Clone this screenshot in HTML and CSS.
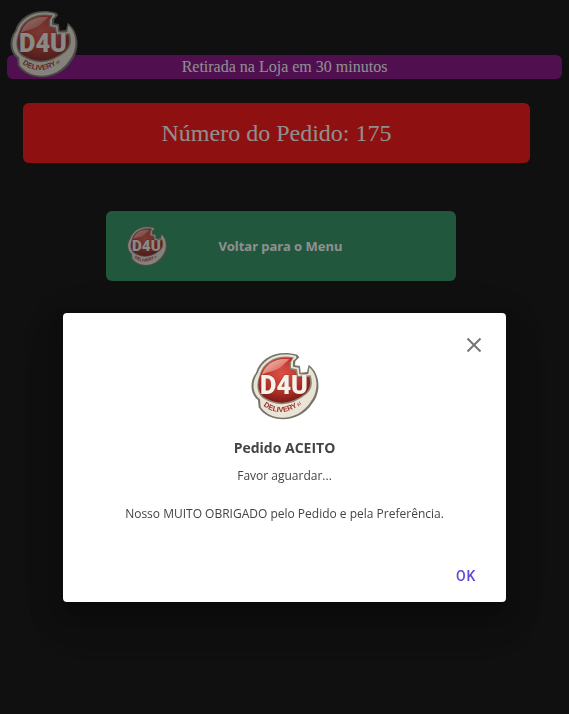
FILE: index.html
```html
<!DOCTYPE html>
<html lang="pt-BR">
<head>
  <meta charset="UTF-8" />
  <meta name="viewport" content="width=device-width, initial-scale=1.0" />
  <title>D4U Delivery - Pedido</title>
  <link rel="stylesheet" href="styles.css">
</head>
<body>
  <header class="top">
    <!-- D4U logo, reused in the button and the dialog -->
    <svg class="top-logo" viewBox="32 36 210 204" role="img" aria-label="D4U Delivery">
      <defs>
        <radialGradient id="ball" cx="45%" cy="35%" r="65%">
          <stop offset="0" stop-color="#dc5146" />
          <stop offset="0.55" stop-color="#bc342c" />
          <stop offset="1" stop-color="#7d1916" />
        </radialGradient>
        <linearGradient id="shine" x1="0" y1="0" x2="1" y2="1">
          <stop offset="0" stop-color="#f6c8bb" />
          <stop offset="1" stop-color="#cf473d" />
        </linearGradient>
        <path id="banner-line" d="M72 197 Q134 244 206 176" />
      </defs>
      <g id="logo">
        <path d="M174 44 C114 28 64 52 50 98 C30 122 32 162 56 180 L58 202 C88 252 182 252 219 190 C246 158 244 100 208 74 L203 96 L184 98 L182 78 L167 76 L168 64 L180 52 Z" fill="#77756a" />
        <path d="M170 48 C116 34 70 56 55 100 C37 124 38 160 62 178 L64 201 C94 245 174 247 213 187 C239 155 237 106 210 82 L207 102 L180 103 L178 83 L161 80 L161 63 L171 54 Z" fill="#e9e4d6" />
        <path d="M163 52 C114 42 72 64 61 104 C50 132 52 158 70 174 Q135 216 202 162 C218 148 221 130 214 106 L176 108 L173 88 L155 84 L155 66 Z" fill="#8d8375" />
        <path d="M160 55 C116 46 74 68 63 106 C53 132 56 156 74 171 Q135 210 198 160 C212 146 215 130 210 111 L173 111 L169 92 L151 87 L151 68 Z" fill="url(#ball)" />
        <path d="M150 58 C108 52 76 74 67 106 C78 94 118 96 134 72 Z" fill="url(#shine)" />
        <text class="logo-name" x="134" y="163" text-anchor="middle">D4U</text>
        <text class="logo-sub"><textPath href="#banner-line">DELIVERY<tspan class="logo-small"> AÍ</tspan></textPath></text>
      </g>
    </svg>
    <div class="top-bar">Retirada na Loja em 30 minutos</div>
  </header>

  <main class="content">
    <div class="order-number">Número do Pedido: 175</div>
    <button type="button" class="menu-button">
      <svg class="menu-logo" viewBox="32 36 210 204" aria-hidden="true"><use href="#logo" /></svg>
      <span>Voltar para o Menu</span>
    </button>
  </main>

  <div class="overlay">
    <div class="dialog" role="dialog" aria-modal="true" aria-labelledby="dialog-title">
      <button type="button" class="close" aria-label="Fechar">
        <svg viewBox="0 0 16 16" width="16" height="16"><path d="M1.5 1.5 L14.5 14.5 M14.5 1.5 L1.5 14.5" /></svg>
      </button>
      <svg class="dialog-logo" viewBox="32 36 210 204" role="img" aria-label="D4U Delivery"><use href="#logo" /></svg>
      <h1 id="dialog-title">Pedido ACEITO</h1>
      <p>Favor aguardar...</p>
      <p>Nosso MUITO OBRIGADO pelo Pedido e pela Preferência.</p>
      <button type="button" class="ok">OK</button>
    </div>
  </div>
</body>
</html>
```

FILE: styles.css
```css
*, *::before, *::after { box-sizing: border-box; }
body {
  margin: 0;
  padding: 7px;
  min-height: 100vh;
  background: black;
  color: white;
  font-family: "Liberation Serif", "Times New Roman", serif;
}
.logo-name {
  font: 900 76px Roboto, sans-serif;
  fill: #f5f2ea;
  stroke: #8a2d27;
  stroke-width: 2px;
  paint-order: stroke;
}
.logo-sub {
  font: bold 22px "Liberation Sans", Arial, sans-serif;
  fill: #9c2f2a;
}
.logo-small {
  font-size: 12px;
}

/* Header */
.top {
  position: relative;
  padding-top: 48px;
}
.top-logo {
  position: absolute;
  left: 2px;
  top: 2px;
  width: 70px;
  height: 70px;
}
.top-bar {
  background: purple;
  border-radius: 6px;
  font-size: 16px;
  line-height: 24px;
  text-align: center;
}

/* Order number and menu button */
.content {
  display: flex;
  flex-direction: column;
  align-items: center;
  gap: 48px;
  padding: 24px 32px 0 16px;
}
.order-number {
  width: 100%;
  background: red;
  border-radius: 6px;
  font-size: 24px;
  line-height: 60px;
  text-align: center;
}
.menu-button {
  display: grid;
  grid-template-columns: 42px 1fr 42px;
  align-items: center;
  width: 350px;
  max-width: 100%;
  height: 70px;
  margin-left: 8px;
  padding: 0 20px;
  border: none;
  border-radius: 6px;
  background: #208e5a;
  color: white;
  font: bold 13px "Noto Sans", sans-serif;
  cursor: pointer;
}
.menu-logo {
  width: 42px;
  height: 42px;
}

/* Dialog */
.overlay {
  position: fixed;
  inset: 0;
  padding: 313px 11% 0;
  background: rgba(32, 32, 32, 0.5);
}
.dialog {
  display: flex;
  flex-direction: column;
  align-items: center;
  padding: 20px 20px 8px;
  background: white;
  border-radius: 4px;
  box-shadow: 0 11px 15px rgba(0, 0, 0, 0.2), 0 24px 38px rgba(0, 0, 0, 0.14), 0 9px 46px rgba(0, 0, 0, 0.12);
  color: #444;
  font-family: "Open Sans", sans-serif;
  text-align: center;
}
.close {
  align-self: flex-end;
  display: flex;
  padding: 4px;
  border: none;
  background: none;
  cursor: pointer;
}
.close path {
  fill: none;
  stroke: #757575;
  stroke-width: 2;
}
.dialog-logo {
  width: 70px;
  height: 68px;
  margin-top: -5px;
}
.dialog h1 {
  margin: 18px 0 8px;
  font-size: 14px;
  line-height: 20px;
}
.dialog p {
  margin: 0 0 18px;
  font-size: 12px;
  line-height: 20px;
}
.ok {
  align-self: flex-end;
  height: 36px;
  margin-top: 16px;
  padding: 0 10px;
  border: none;
  background: none;
  color: #5f4bdb;
  font: 500 14px Roboto, sans-serif;
  letter-spacing: 1px;
  cursor: pointer;
}
```
